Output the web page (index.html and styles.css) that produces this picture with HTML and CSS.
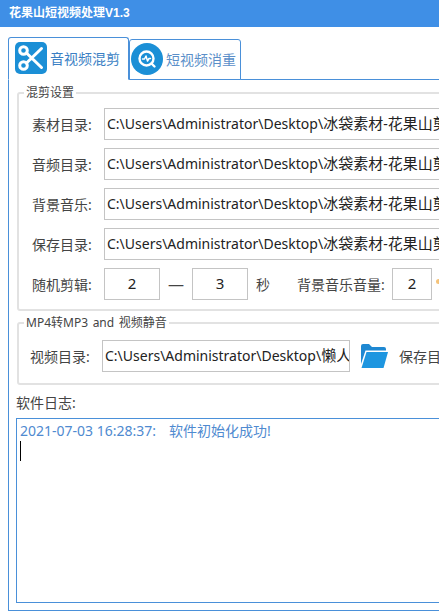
FILE: index.html
```html
<!DOCTYPE html>
<html lang="zh-CN">

<head>
    <meta charset="UTF-8">
    <meta name="viewport" content="width=device-width, initial-scale=1.0">
    <title>花果山短视频处理V1.3</title>
    <link rel="stylesheet" href="styles.css">
</head>

<body>

    <div class="titlebar">花果山短视频处理V1.3</div>

    <div class="tabs">
        <div class="tab active">
            <span class="tab-icon square">
                <svg viewBox="0 0 32 32" width="32" height="32" fill="none" stroke="#fff" stroke-width="3">
                    <circle cx="8.500" cy="8.500" r="3.800" />
                    <circle cx="8.500" cy="23.500" r="3.800" />
                    <path d="M11.500 11 L26.500 25.500 M11.500 21 L26.500 6.500" stroke-linecap="round" />
                </svg>
            </span>
            音视频混剪
        </div>
        <div class="tab">
            <span class="tab-icon round">
                <svg viewBox="0 0 32 32" width="32" height="32" fill="none" stroke="#fff" stroke-width="2.400">
                    <circle cx="15.500" cy="15.500" r="7" />
                    <path d="M20.500 20.500 L23.500 23.500" stroke-linecap="round" />
                    <path d="M11.500 16 L13.500 16 L15 13 L16.500 18 L18 15.500 L19.500 15.500" stroke-linecap="round" stroke-linejoin="round" stroke-width="1.500" />
                </svg>
            </span>
            短视频消重
        </div>
    </div>

    <div class="pane">
        <div class="group mix">
            <div class="legend">混剪设置</div>
            <div class="row">
                <label>素材目录:</label>
                <div class="field">C:\Users\Administrator\Desktop\<span class="cjk">冰袋素材</span>-<span class="cjk">花果山剪</span></div>
            </div>
            <div class="row">
                <label>音频目录:</label>
                <div class="field">C:\Users\Administrator\Desktop\<span class="cjk">冰袋素材</span>-<span class="cjk">花果山剪</span></div>
            </div>
            <div class="row">
                <label>背景音乐:</label>
                <div class="field">C:\Users\Administrator\Desktop\<span class="cjk">冰袋素材</span>-<span class="cjk">花果山剪</span></div>
            </div>
            <div class="row">
                <label>保存目录:</label>
                <div class="field">C:\Users\Administrator\Desktop\<span class="cjk">冰袋素材</span>-<span class="cjk">花果山剪</span></div>
            </div>
            <div class="row">
                <label>随机剪辑:</label>
                <div class="num">2</div>
                <span class="dash">—</span>
                <div class="num">3</div>
                <span class="sec">秒</span>
                <label class="volume">背景音乐音量:</label>
                <div class="num small">2</div>
                <span class="star"></span>
            </div>
        </div>

        <div class="group convert">
            <div class="legend">MP4转MP3 and 视频静音</div>
            <div class="row">
                <label>视频目录:</label>
                <div class="field video">C:\Users\Administrator\Desktop\<span class="cjk">懒人</span></div>
                <svg class="folder" viewBox="0 0 28 24" width="28" height="24">
                    <path d="M1 2 Q1 0 3 0 L9 0 L12 3 L24 3 Q26 3 26 5 L26 6.500 L5.500 6.500 L1 20 Z" fill="#1e88d2" />
                    <path d="M6.500 8 L28 8 L23.500 24 L1.500 24 Z" fill="#1e96e0" />
                </svg>
                <label class="save">保存目录:</label>
            </div>
        </div>

        <div class="log-label">软件日志:</div>
        <div class="log">
            <div class="log-line"><span>2021-07-03 16:28:37:</span><span class="log-msg">软件初始化成功!</span></div>
            <div class="caret"></div>
        </div>
    </div>

</body>

</html>
```

FILE: styles.css
```css
* {
    box-sizing: border-box;
}

html,
body {
    margin: 0;
    padding: 0;
    width: 439px;
    height: 615px;
    overflow: hidden;
    background-color: #fff;
    font-family: "Noto Sans", "Noto Sans CJK SC", sans-serif;
    font-size: 14px;
    color: #444;
}

.titlebar {
    height: 27px;
    line-height: 27px;
    padding-left: 9px;
    background-color: #3f8fe6;
    color: #fff;
    font-family: "Liberation Sans", "Noto Sans CJK SC", sans-serif;
    font-size: 12px;
    font-weight: bold;
}

.tabs {
    display: flex;
    align-items: flex-end;
    height: 53px;
    padding-left: 8px;
    margin-bottom: -1px;
    position: relative;
    z-index: 1;
}

.tab {
    display: flex;
    align-items: center;
    gap: 3px;
    width: 112px;
    height: 41px;
    padding: 0 0 1px 1px;
    border: 1px solid #4a90d9;
    border-radius: 3px 3px 0 0;
    color: #5b8fc9;
    background-color: #fff;
}

.tab.active {
    width: 121px;
    height: 43px;
    padding: 0 0 2px 6px;
    border-bottom-color: #fff;
    color: #3b7fc4;
}

.tab-icon {
    display: flex;
    align-items: center;
    justify-content: center;
    width: 32px;
    height: 32px;
    background-color: #1b8fd6;
}

.tab-icon.square {
    border-radius: 5px;
}

.tab-icon.round {
    border-radius: 50%;
}

.pane {
    width: 600px;
    height: 532px;
    margin-left: 8px;
    padding: 12px 0 0 8px;
    border: 1px solid #4a90d9;
}

.group {
    position: relative;
    border: 2px solid #e2e2e2;
    border-radius: 3px;
}

.mix {
    height: 219px;
    padding: 14px 0 0 13px;
}

.convert {
    height: 63px;
    margin-top: 11px;
    padding: 16px 0 0 11px;
}

.legend {
    position: absolute;
    top: -9px;
    left: 5px;
    padding: 0 2px;
    background-color: #fff;
    font-size: 12px;
    line-height: 16px;
    word-spacing: 1.5px;
}

.row {
    display: flex;
    align-items: center;
    height: 32px;
    margin-bottom: 8px;
}

.row label {
    flex: none;
    width: 72px;
}

.field {
    flex: none;
    width: 420px;
    height: 32px;
    line-height: 29px;
    padding-left: 2px;
    border: 1px solid #c4c4c4;
    color: #222;
    white-space: nowrap;
    overflow: hidden;
}

.field.video {
    width: 248px;
}

.cjk {
    font-size: 15px;
}

.num {
    flex: none;
    width: 56px;
    height: 32px;
    line-height: 29px;
    border: 1px solid #c4c4c4;
    text-align: center;
    color: #222;
    font-size: 15px;
}

.num.small {
    width: 40px;
}

.dash {
    width: 32px;
    text-align: center;
    font-size: 16px;
}

.sec {
    width: 49px;
    padding-left: 8px;
}

.row .volume {
    width: 95px;
}

.star {
    width: 5px;
    height: 5px;
    margin: 0 0 6px 4px;
    border-radius: 50%;
    background-color: #f5c37a;
}

.folder {
    flex: none;
    margin-left: 10px;
}

.row .save {
    margin-left: 11px;
}

.log-label {
    height: 20px;
    margin: 8px 0 0 -1px;
    line-height: 20px;
}

.log {
    height: 185px;
    margin: 5px 0 0 -1px;
    padding: 3px 0 0 3px;
    border: 1px solid #4a90d9;
}

.log-line {
    color: #4f8ad0;
    line-height: 18px;
}

.log-msg {
    margin-left: 13px;
}

.caret {
    width: 1px;
    height: 20px;
    margin-top: 1px;
    background-color: #000;
}
```
